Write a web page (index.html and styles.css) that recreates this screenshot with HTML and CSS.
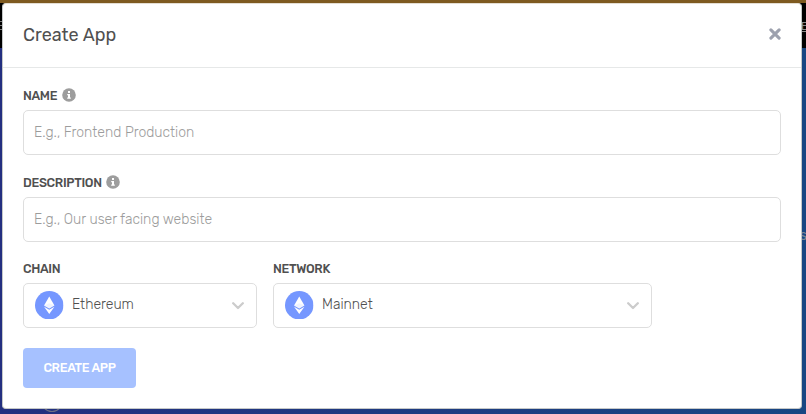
FILE: index.html
```
<!DOCTYPE html>
<html lang="en">
<head>
<meta charset="utf-8">
<title>Create App</title>
<link rel="stylesheet" href="styles.css">
</head>
<body>
<svg class="defs" aria-hidden="true">
  <symbol id="info" viewBox="0 0 14 14">
    <circle cx="7" cy="7" r="6.8" fill="#9d9d9d"/>
    <path d="M6 3h2v1.900H6zM5.200 5.900H8v3.600h.8v1.300H5.200V9.500H6V7.200h-.8z" fill="#fff"/>
  </symbol>
  <symbol id="eth" viewBox="0 0 28 28">
    <circle cx="14" cy="14" r="14" fill="#7597ff"/>
    <path d="M14 5.500 19.100 14.200 14 17.200 8.900 14.200z" fill="#fff"/>
    <path d="M8.900 15.400 14 18.400 19.100 15.400 14 22.700z" fill="#fff"/>
    <path d="M9.200 14.100 14 12.100 18.800 14.100 14 16.900z" fill="#dce5ff" opacity=".45"/>
  </symbol>
  <symbol id="chevron" viewBox="0 0 12 8">
    <path d="M1.200 1.300 6 6 10.800 1.300" fill="none" stroke="#ccc" stroke-width="2.300" stroke-linecap="round" stroke-linejoin="round"/>
  </symbol>
</svg>
<div class="page">
  <div class="announcement"></div>
  <div class="nav"><span class="brand"></span><span class="link">E</span></div>
  <div class="hero"><span class="side">s</span><span class="ring"></span></div>
</div>
<div class="modal">
  <header class="head">
    <h1>Create App</h1>
    <svg class="close" viewBox="0 0 12 12"><path d="M1.900 1.900 10.100 10.100M10.100 1.900 1.900 10.100" stroke="#9da1ae" stroke-width="3.100" stroke-linecap="round"/></svg>
  </header>
  <form class="body">
    <div class="field">
      <div class="label"><span>NAME</span><svg class="info"><use href="#info"/></svg></div>
      <div class="box"><span class="ph">E.g., Frontend Production</span></div>
    </div>
    <div class="field">
      <div class="label tight"><span>DESCRIPTION</span><svg class="info"><use href="#info"/></svg></div>
      <div class="box"><span class="ph">E.g., Our user facing website</span></div>
    </div>
    <div class="row">
      <div class="chain">
        <div class="label"><span>CHAIN</span></div>
        <div class="box select"><svg class="eth"><use href="#eth"/></svg><span class="value">Ethereum</span><svg class="chevron"><use href="#chevron"/></svg></div>
      </div>
      <div class="network">
        <div class="label"><span>NETWORK</span></div>
        <div class="box select"><svg class="eth"><use href="#eth"/></svg><span class="value">Mainnet</span><svg class="chevron"><use href="#chevron"/></svg></div>
      </div>
    </div>
    <button class="submit" type="button">CREATE APP</button>
  </form>
</div>
</body>
</html>
```
FILE: styles.css
```
* { box-sizing: border-box; }
body {
  margin: 0;
  width: 806px;
  height: 414px;
  overflow: hidden;
  position: relative;
  font-family: Rubik, Roboto, sans-serif;
  color: #505050;
}
.defs { position: absolute; width: 0; height: 0; }
.page { position: absolute; inset: 0; display: flex; flex-direction: column; }
.announcement { height: 3px; background: #7e5a20; }
.nav { height: 45px; background: #000; position: relative; }
.brand { position: absolute; left: 0; top: 18px; width: 3px; height: 9px; border: solid #777; border-width: 1px 0; background: linear-gradient(#000 3px, #777 3px 4px, #000 4px); }
.link { position: absolute; right: -2px; top: 16px; font-size: 12px; line-height: 14px; color: #888; text-decoration: underline; }
.hero { flex: 1; position: relative; background: linear-gradient(90deg, #232f80, #184682); }
.side { position: absolute; right: -1px; top: 180px; font-size: 14px; line-height: 16px; color: #7c8796; }
.ring { position: absolute; left: 41px; top: 341px; width: 22px; height: 23px; border: 1px solid #6d7086; border-radius: 50%; }
.modal {
  position: absolute;
  left: 2px;
  top: 3px;
  width: 800px;
  height: 406px;
  background: #fff;
  border: 1px solid #c5c8c8;
  border-top-color: #e4ded3;
  border-radius: 4px;
}
.head {
  height: 64px;
  padding: 0 20px 2px;
  display: flex;
  align-items: center;
  justify-content: space-between;
  border-bottom: 1px solid #e6e8e8;
}
h1 { margin: 0; font-size: 18px; line-height: 24px; font-weight: 400; white-space: nowrap; }
.close { width: 12px; height: 12px; margin-bottom: 1px; }
.body { padding: 17px 20px 0; }
.field { height: 87px; }
.label { height: 20px; margin-bottom: 5px; display: flex; align-items: center; gap: 5px; font-size: 12.5px; font-weight: 500; letter-spacing: -.33px; white-space: nowrap; }
.tight { gap: 4px; }
.info { width: 14px; height: 14px; }
.box {
  height: 45px;
  padding: 0 11px;
  border: 1px solid #dedede;
  border-radius: 5px;
  display: flex;
  align-items: center;
  white-space: nowrap;
}
.select { padding-bottom: 1px; }
.ph, .value { font-size: 14px; line-height: 20px; font-weight: 300; }
.ph { color: #9c9c9c; margin-left: -1px; }
.row { display: flex; gap: 16px; margin-top: -1px; }
.chain { width: 234px; }
.network { width: 379px; }
.eth { width: 28.5px; height: 28.5px; flex: none; }
.value { margin-left: 8.5px; padding-bottom: 1px; }
.chevron { width: 12px; height: 8px; margin: 2px 1px 0 auto; }
.submit {
  display: block;
  width: 113px;
  height: 40px;
  margin: 20px 0 0;
  padding: 0 0 1px;
  border: 0;
  border-radius: 4px;
  background: #a6c1ff;
  color: #fff;
  font: 500 12.5px/39px Rubik, Roboto, sans-serif;
  letter-spacing: -.33px;
}
```
